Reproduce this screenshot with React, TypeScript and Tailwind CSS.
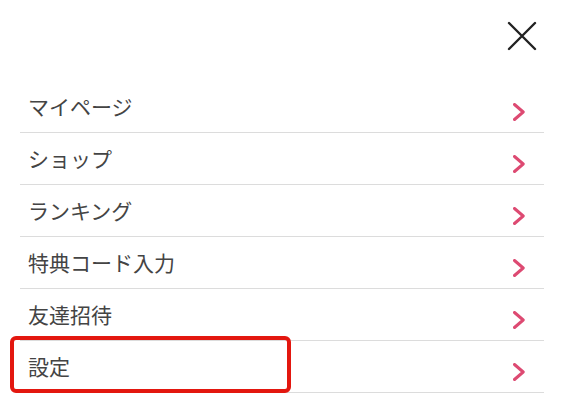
const items = ['マイページ', 'ショップ', 'ランキング', '特典コード入力', '友達招待', '設定'];

function Chevron() {
  return (
    <svg width="12" height="18" viewBox="0 0 12 18" fill="none" className="mt-[22px] shrink-0">
      <polyline
        points="1.5,1.5 10.2,9 1.5,16.5"
        stroke="#dd4a72"
        strokeWidth="3"
        strokeLinecap="round"
        strokeLinejoin="round"
      />
    </svg>
  );
}

export default function App() {
  return (
    <div
      className="w-[568px] h-[405px] bg-white overflow-hidden"
      style={{ fontFamily: '"Noto Sans CJK JP", "Noto Sans", sans-serif' }}
    >
      <div className="flex justify-end pt-[21px] pr-[31px] h-[81px]">
        <svg width="30" height="30" viewBox="0 0 30 30" fill="none">
          <path d="M2 2 L28 28 M28 2 L2 28" stroke="#222" strokeWidth="2.4" strokeLinecap="round" />
        </svg>
      </div>
      <ul className="mx-[20px] w-[524px]">
        {items.map((label, i) => (
          <li
            key={label}
            className="relative flex justify-between h-[52px] border-b border-[#dcdcdc] pl-[8px] pr-[19px]"
          >
            <span className="text-[21px] leading-[50px] text-[#444]">{label}</span>
            <Chevron />
            {i === items.length - 1 && (
              <div className="absolute left-[-10px] top-[-5px] w-[281px] h-[57px] border-4 border-[#e3170f] rounded-[6px]" />
            )}
          </li>
        ))}
      </ul>
    </div>
  );
}
